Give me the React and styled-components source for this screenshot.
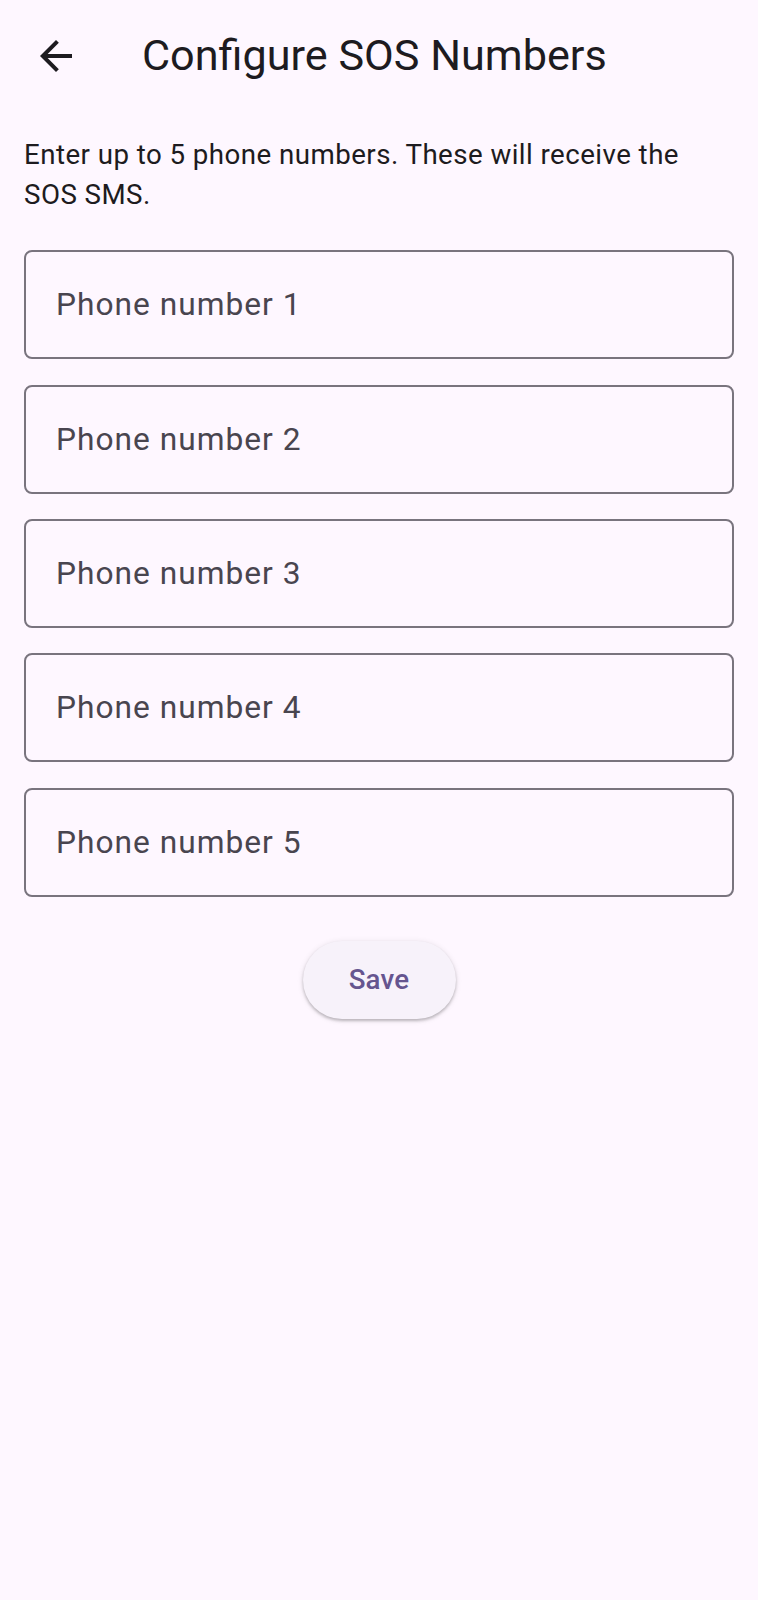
import React from 'react'
import styled, { createGlobalStyle } from 'styled-components'

const GlobalStyle = createGlobalStyle`
    html, body {
        margin: 0;
        padding: 0;
        background: #FEF7FF;
    }
    * {
        box-sizing: border-box;
    }
`

const fields = [1, 2, 3, 4, 5]

const App = () => {
    return(
        <Page>
            <GlobalStyle />
            <TopBar>
                <Leading aria-label='Back'>
                    <svg width='48' height='48' viewBox='0 0 24 24'>
                        <path fill='#1D1B20' d='M20 11H7.83l5.59-5.59L12 4l-8 8 8 8 1.41-1.41L7.83 13H20v-2z' />
                    </svg>
                </Leading>
                <Title>Configure SOS Numbers</Title>
            </TopBar>
            <Body>
                <Intro>Enter up to 5 phone numbers. These will receive the SOS SMS.</Intro>
                <FieldList>
                    {fields.map(n => (
                        <Field key={n}>
                            <Input placeholder={`Phone number ${n}`} />
                        </Field>
                    ))}
                </FieldList>
                <Actions>
                    <SaveButton>Save</SaveButton>
                </Actions>
            </Body>
        </Page>
    )
}

const Page = styled.div`
    min-height: 1600px;
    background: #FEF7FF;
    font-family: Roboto, "Noto Sans", sans-serif;
    color: #1D1B20;
`

const TopBar = styled.header`
    height: 111px;
    display: flex;
    align-items: center;
`

const Leading = styled.button`
    width: 111px;
    height: 111px;
    padding: 0;
    border: none;
    background: none;
    display: flex;
    align-items: center;
    justify-content: center;
    svg {
        display: block;
        margin-left: 1px;
        margin-top: 1px;
    }
`

const Title = styled.h1`
    margin: 0 0 0 31px;
    font-size: 43.2px;
    font-weight: 400;
    line-height: 55px;
    color: #1D1B20;
`

const Body = styled.main`
    padding: 24px 24px 0 24px;
`

const Intro = styled.p`
    margin: 0;
    font-size: 27.7px;
    line-height: 39.6px;
    letter-spacing: 0.45px;
    color: #1D1B20;
    max-width: 660px;
`

const FieldList = styled.div`
    margin-top: 36px;
    display: grid;
    gap: 25.4px;
`

const Field = styled.div`
    height: 109px;
    border: 2px solid #79747E;
    border-radius: 8px;
    display: flex;
    align-items: center;
    padding: 0 30px;
`

const Input = styled.input`
    width: 100%;
    border: none;
    outline: none;
    background: transparent;
    font-family: Roboto, "Noto Sans", sans-serif;
    font-size: 31.7px;
    letter-spacing: 1px;
    color: #1D1B20;
    padding: 0;
    &::placeholder {
        color: #49454F;
    }
`

const Actions = styled.div`
    margin-top: 44px;
    display: flex;
    justify-content: center;
`

const SaveButton = styled.button`
    width: 153px;
    height: 78px;
    border: none;
    border-radius: 39px;
    background: #F7F2FA;
    box-shadow: 0 2px 3px rgba(0, 0, 0, 0.22), 0 1px 6px rgba(0, 0, 0, 0.1);
    font-family: Roboto, "Noto Sans", sans-serif;
    font-size: 27.7px;
    font-weight: 500;
    letter-spacing: 0.2px;
    color: #65558F;
`

export default App
